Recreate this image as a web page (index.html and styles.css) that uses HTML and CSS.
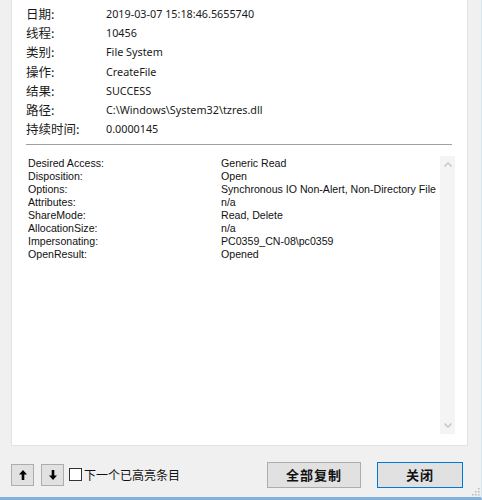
FILE: index.html
```html
<!DOCTYPE html>
<html>
<head>
    <title>事件属性</title>
    <link rel="stylesheet" href="styles.css">
</head>
<body>
    <div class="window">
        <div class="panel">
            <div class="summary">
                <div class="row"><span class="label">日期:</span><span class="value">2019-03-07 15:18:46.5655740</span></div>
                <div class="row"><span class="label">线程:</span><span class="value">10456</span></div>
                <div class="row"><span class="label">类别:</span><span class="value">File System</span></div>
                <div class="row"><span class="label">操作:</span><span class="value">CreateFile</span></div>
                <div class="row"><span class="label">结果:</span><span class="value">SUCCESS</span></div>
                <div class="row"><span class="label">路径:</span><span class="value">C:\Windows\System32\tzres.dll</span></div>
                <div class="row"><span class="label">持续时间:</span><span class="value">0.0000145</span></div>
            </div>
            <div class="divider"></div>
            <div class="details">
                <div class="detail-list">
                    <div class="detail"><span class="dkey">Desired Access:</span><span>Generic Read</span></div>
                    <div class="detail"><span class="dkey">Disposition:</span><span>Open</span></div>
                    <div class="detail"><span class="dkey">Options:</span><span>Synchronous IO Non-Alert, Non-Directory File</span></div>
                    <div class="detail"><span class="dkey">Attributes:</span><span>n/a</span></div>
                    <div class="detail"><span class="dkey">ShareMode:</span><span>Read, Delete</span></div>
                    <div class="detail"><span class="dkey">AllocationSize:</span><span>n/a</span></div>
                    <div class="detail"><span class="dkey">Impersonating:</span><span>PC0359_CN-08\pc0359</span></div>
                    <div class="detail"><span class="dkey">OpenResult:</span><span>Opened</span></div>
                </div>
                <div class="scrollbar">
                    <svg class="arrow" width="14" height="14" viewBox="0 0 14 14"><path d="M3.5 8.5 L7 5 L10.5 8.5" fill="none" stroke="#c2c2c2" stroke-width="1.3"/></svg>
                    <svg class="arrow" width="14" height="14" viewBox="0 0 14 14"><path d="M3.5 5.5 L7 9 L10.5 5.5" fill="none" stroke="#c2c2c2" stroke-width="1.3"/></svg>
                </div>
            </div>
        </div>
        <div class="footer">
            <button class="nav-btn"><svg width="10" height="12" viewBox="0 0 10 12"><path d="M5 1 L9 5.5 H6.3 V11 H3.7 V5.5 H1 Z" fill="#000"/></svg></button>
            <button class="nav-btn"><svg width="10" height="12" viewBox="0 0 10 12"><path d="M5 11 L9 6.5 H6.3 V1 H3.7 V6.5 H1 Z" fill="#000"/></svg></button>
            <label class="check"><span class="box"></span>下一个已高亮条目</label>
            <div class="spacer"></div>
            <button class="btn">全部复制</button>
            <button class="btn primary">关闭</button>
        </div>
        <svg class="grip" width="10" height="10" viewBox="0 0 10 10">
            <rect x="8" y="2" width="1.5" height="1.5" fill="#b8b8b8"/>
            <rect x="5" y="5" width="1.5" height="1.5" fill="#b8b8b8"/>
            <rect x="8" y="5" width="1.5" height="1.5" fill="#b8b8b8"/>
            <rect x="2" y="8" width="1.5" height="1.5" fill="#b8b8b8"/>
            <rect x="5" y="8" width="1.5" height="1.5" fill="#b8b8b8"/>
            <rect x="8" y="8" width="1.5" height="1.5" fill="#b8b8b8"/>
        </svg>
    </div>
</body>
</html>
```

FILE: styles.css
```css
body {
    margin: 0;
    background: #f0f0f0;
    font-family: "Noto Sans", "Noto Sans CJK SC", sans-serif;
}
.window {
    position: relative;
    width: 482px;
    height: 500px;
    box-sizing: border-box;
    padding: 0 13px 0 11px;
    border-right: 1px solid #d6e6f3;
    border-bottom: 3px solid #7fb2de;
    background: #f0f0f0;
}
.panel {
    height: 446px;
    background: #fff;
    border: 1px solid #e3e3e3;
    border-top: none;
    box-sizing: border-box;
    padding: 4px 12px 0 14px;
    display: flex;
    flex-direction: column;
}
.summary {
    display: flex;
    flex-direction: column;
}
.row {
    display: flex;
    height: 19.2px;
    align-items: center;
    font-size: 10.8px;
    color: #1a1a1a;
}
.label {
    width: 80px;
    font-family: "Noto Sans CJK SC", sans-serif;
    font-size: 12.5px;
}
.divider {
    height: 1px;
    background: #a0a0a0;
    margin-top: 6px;
    margin-right: 3px;
}
.details {
    display: flex;
    flex: 1;
    margin-top: 11px;
    margin-bottom: 11px;
    padding-left: 2px;
}
.detail-list {
    flex: 1;
    padding-top: 1px;
}
.detail {
    display: flex;
    font-family: "Liberation Sans", sans-serif;
    font-size: 10.6px;
    height: 13px;
    line-height: 13px;
    color: #111;
    white-space: nowrap;
}
.dkey {
    width: 193px;
    flex-shrink: 0;
}
.scrollbar {
    width: 15px;
    background: #f4f4f4;
    display: flex;
    flex-direction: column;
    justify-content: space-between;
    align-items: center;
    padding: 2px 0;
}
.footer {
    display: flex;
    align-items: center;
    height: 51px;
    box-sizing: border-box;
    padding-top: 6px;
}
.nav-btn {
    width: 23px;
    height: 22px;
    margin-right: 7px;
    padding: 0;
    background: #e1e1e1;
    border: 1px solid #adadad;
    display: flex;
    align-items: center;
    justify-content: center;
}
.nav-btn + .nav-btn {
    margin-right: 5px;
}
.check {
    display: flex;
    align-items: center;
    font-family: "Noto Sans CJK SC", sans-serif;
    font-size: 12px;
    color: #111;
}
.box {
    width: 11px;
    height: 11px;
    border: 1px solid #333;
    background: #fff;
    margin-right: 2px;
}
.spacer {
    flex: 1;
}
.btn {
    width: 94px;
    height: 26px;
    background: #e1e1e1;
    border: 1px solid #adadad;
    font-family: "Noto Sans CJK SC", sans-serif;
    font-weight: bold;
    font-size: 13px;
    color: #111;
    letter-spacing: 1px;
    padding: 0;
}
.btn.primary {
    width: 86px;
    margin-left: 16px;
    margin-right: 5px;
    border-color: #0078d7;
}
.grip {
    position: absolute;
    right: 1px;
    bottom: 1px;
}
```
